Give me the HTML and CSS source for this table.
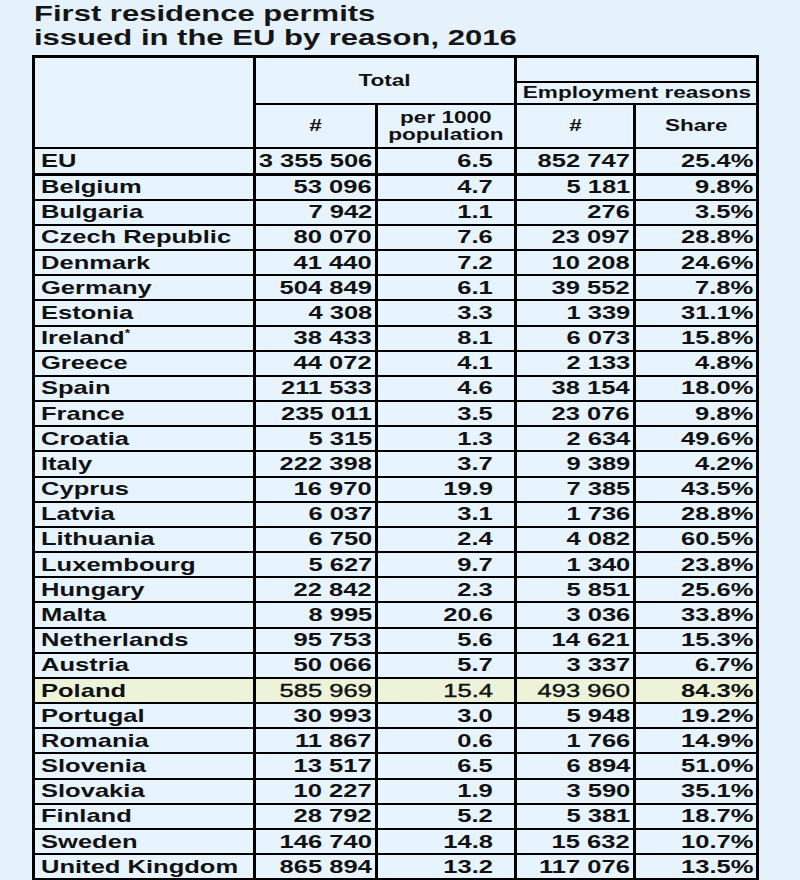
FILE: index.html
```html
<!DOCTYPE html>
<html lang="en">
<head>
<meta charset="utf-8">
<title>First residence permits issued in the EU by reason, 2016</title>
<link rel="stylesheet" href="styles.css">
</head>
<body>
<div class="page">
  <h1 class="title">
    <span class="line">First residence permits</span>
    <span class="line">issued in the EU by reason, 2016</span>
  </h1>
  <table class="permits">
    <colgroup>
      <col class="c-country">
      <col class="c-num">
      <col class="c-rate">
      <col class="c-emp">
      <col class="c-share">
    </colgroup>
    <thead>
      <tr class="h1">
        <th rowspan="3" class="corner"></th>
        <th colspan="2" rowspan="2" class="hd"><span class="sx">Total</span></th>
        <th colspan="2" class="blank"></th>
      </tr>
      <tr class="h2">
        <th colspan="2" class="hd"><span class="sx">Employment reasons</span></th>
      </tr>
      <tr class="h3">
        <th class="hd"><span class="sx">#</span></th>
        <th class="hd"><span class="sx">per 1000<br>population</span></th>
        <th class="hd"><span class="sx">#</span></th>
        <th class="hd"><span class="sx">Share</span></th>
      </tr>
    </thead>
    <tbody>
      <tr class="eu"><td class="name"><span class="sx">EU</span></td><td class="num tight"><span class="sx">3 355 506</span></td><td class="num rate"><span class="sx">6.5</span></td><td class="num tight"><span class="sx">852 747</span></td><td class="num tight"><span class="sx">25.4%</span></td></tr>
      <tr><td class="name"><span class="sx">Belgium</span></td><td class="num"><span class="sx">53 096</span></td><td class="num rate"><span class="sx">4.7</span></td><td class="num"><span class="sx">5 181</span></td><td class="num"><span class="sx">9.8%</span></td></tr>
      <tr><td class="name"><span class="sx">Bulgaria</span></td><td class="num"><span class="sx">7 942</span></td><td class="num rate"><span class="sx">1.1</span></td><td class="num"><span class="sx">276</span></td><td class="num"><span class="sx">3.5%</span></td></tr>
      <tr><td class="name"><span class="sx">Czech Republic</span></td><td class="num"><span class="sx">80 070</span></td><td class="num rate"><span class="sx">7.6</span></td><td class="num"><span class="sx">23 097</span></td><td class="num"><span class="sx">28.8%</span></td></tr>
      <tr><td class="name"><span class="sx">Denmark</span></td><td class="num"><span class="sx">41 440</span></td><td class="num rate"><span class="sx">7.2</span></td><td class="num"><span class="sx">10 208</span></td><td class="num"><span class="sx">24.6%</span></td></tr>
      <tr><td class="name"><span class="sx">Germany</span></td><td class="num"><span class="sx">504 849</span></td><td class="num rate"><span class="sx">6.1</span></td><td class="num"><span class="sx">39 552</span></td><td class="num"><span class="sx">7.8%</span></td></tr>
      <tr><td class="name"><span class="sx">Estonia</span></td><td class="num"><span class="sx">4 308</span></td><td class="num rate"><span class="sx">3.3</span></td><td class="num"><span class="sx">1 339</span></td><td class="num"><span class="sx">31.1%</span></td></tr>
      <tr><td class="name"><span class="sx">Ireland<sup>*</sup></span></td><td class="num"><span class="sx">38 433</span></td><td class="num rate"><span class="sx">8.1</span></td><td class="num"><span class="sx">6 073</span></td><td class="num"><span class="sx">15.8%</span></td></tr>
      <tr><td class="name"><span class="sx">Greece</span></td><td class="num"><span class="sx">44 072</span></td><td class="num rate"><span class="sx">4.1</span></td><td class="num"><span class="sx">2 133</span></td><td class="num"><span class="sx">4.8%</span></td></tr>
      <tr><td class="name"><span class="sx">Spain</span></td><td class="num"><span class="sx">211 533</span></td><td class="num rate"><span class="sx">4.6</span></td><td class="num"><span class="sx">38 154</span></td><td class="num"><span class="sx">18.0%</span></td></tr>
      <tr><td class="name"><span class="sx">France</span></td><td class="num"><span class="sx">235 011</span></td><td class="num rate"><span class="sx">3.5</span></td><td class="num"><span class="sx">23 076</span></td><td class="num"><span class="sx">9.8%</span></td></tr>
      <tr><td class="name"><span class="sx">Croatia</span></td><td class="num"><span class="sx">5 315</span></td><td class="num rate"><span class="sx">1.3</span></td><td class="num"><span class="sx">2 634</span></td><td class="num"><span class="sx">49.6%</span></td></tr>
      <tr><td class="name"><span class="sx">Italy</span></td><td class="num"><span class="sx">222 398</span></td><td class="num rate"><span class="sx">3.7</span></td><td class="num"><span class="sx">9 389</span></td><td class="num"><span class="sx">4.2%</span></td></tr>
      <tr><td class="name"><span class="sx">Cyprus</span></td><td class="num"><span class="sx">16 970</span></td><td class="num rate"><span class="sx">19.9</span></td><td class="num"><span class="sx">7 385</span></td><td class="num"><span class="sx">43.5%</span></td></tr>
      <tr><td class="name"><span class="sx">Latvia</span></td><td class="num"><span class="sx">6 037</span></td><td class="num rate"><span class="sx">3.1</span></td><td class="num"><span class="sx">1 736</span></td><td class="num"><span class="sx">28.8%</span></td></tr>
      <tr><td class="name"><span class="sx">Lithuania</span></td><td class="num"><span class="sx">6 750</span></td><td class="num rate"><span class="sx">2.4</span></td><td class="num"><span class="sx">4 082</span></td><td class="num"><span class="sx">60.5%</span></td></tr>
      <tr><td class="name"><span class="sx">Luxembourg</span></td><td class="num"><span class="sx">5 627</span></td><td class="num rate"><span class="sx">9.7</span></td><td class="num"><span class="sx">1 340</span></td><td class="num"><span class="sx">23.8%</span></td></tr>
      <tr><td class="name"><span class="sx">Hungary</span></td><td class="num"><span class="sx">22 842</span></td><td class="num rate"><span class="sx">2.3</span></td><td class="num"><span class="sx">5 851</span></td><td class="num"><span class="sx">25.6%</span></td></tr>
      <tr><td class="name"><span class="sx">Malta</span></td><td class="num"><span class="sx">8 995</span></td><td class="num rate"><span class="sx">20.6</span></td><td class="num"><span class="sx">3 036</span></td><td class="num"><span class="sx">33.8%</span></td></tr>
      <tr><td class="name"><span class="sx">Netherlands</span></td><td class="num"><span class="sx">95 753</span></td><td class="num rate"><span class="sx">5.6</span></td><td class="num"><span class="sx">14 621</span></td><td class="num"><span class="sx">15.3%</span></td></tr>
      <tr><td class="name"><span class="sx">Austria</span></td><td class="num"><span class="sx">50 066</span></td><td class="num rate"><span class="sx">5.7</span></td><td class="num"><span class="sx">3 337</span></td><td class="num"><span class="sx">6.7%</span></td></tr>
      <tr class="hl"><td class="name"><span class="sx">Poland</span></td><td class="num light"><span class="sx">585 969</span></td><td class="num rate light"><span class="sx">15.4</span></td><td class="num light"><span class="sx">493 960</span></td><td class="num"><span class="sx">84.3%</span></td></tr>
      <tr><td class="name"><span class="sx">Portugal</span></td><td class="num"><span class="sx">30 993</span></td><td class="num rate"><span class="sx">3.0</span></td><td class="num"><span class="sx">5 948</span></td><td class="num"><span class="sx">19.2%</span></td></tr>
      <tr><td class="name"><span class="sx">Romania</span></td><td class="num"><span class="sx">11 867</span></td><td class="num rate"><span class="sx">0.6</span></td><td class="num"><span class="sx">1 766</span></td><td class="num"><span class="sx">14.9%</span></td></tr>
      <tr><td class="name"><span class="sx">Slovenia</span></td><td class="num"><span class="sx">13 517</span></td><td class="num rate"><span class="sx">6.5</span></td><td class="num"><span class="sx">6 894</span></td><td class="num"><span class="sx">51.0%</span></td></tr>
      <tr><td class="name"><span class="sx">Slovakia</span></td><td class="num"><span class="sx">10 227</span></td><td class="num rate"><span class="sx">1.9</span></td><td class="num"><span class="sx">3 590</span></td><td class="num"><span class="sx">35.1%</span></td></tr>
      <tr><td class="name"><span class="sx">Finland</span></td><td class="num"><span class="sx">28 792</span></td><td class="num rate"><span class="sx">5.2</span></td><td class="num"><span class="sx">5 381</span></td><td class="num"><span class="sx">18.7%</span></td></tr>
      <tr><td class="name"><span class="sx">Sweden</span></td><td class="num"><span class="sx">146 740</span></td><td class="num rate"><span class="sx">14.8</span></td><td class="num"><span class="sx">15 632</span></td><td class="num"><span class="sx">10.7%</span></td></tr>
      <tr><td class="name"><span class="sx">United Kingdom</span></td><td class="num"><span class="sx">865 894</span></td><td class="num rate"><span class="sx">13.2</span></td><td class="num"><span class="sx">117 076</span></td><td class="num"><span class="sx">13.5%</span></td></tr>
    </tbody>
  </table>
</div>
</body>
</html>
```
FILE: styles.css
```css
html, body {
  margin: 0;
  padding: 0;
  background: #e5f2fc;
}

.page {
  width: 800px;
  height: 880px;
  overflow: hidden;
  font-family: "Liberation Sans", Arial, sans-serif;
  color: #111;
}

.title {
  margin: 0;
  padding: 2px 0 0 34px;
  font-size: 22px;
  line-height: 24px;
  font-weight: bold;
  color: #151515;
  height: 55px;
  box-sizing: border-box;
}

.title .line {
  display: block;
  transform: scaleX(1.41);
  transform-origin: left center;
  white-space: nowrap;
}

.permits {
  margin-left: 32px;
  border-collapse: collapse;
  table-layout: fixed;
  width: 724px;
  border: 3px solid #000;
  background: #e8f4fd;
}

.c-country { width: 221px; }
.c-num { width: 122px; }
.c-rate { width: 139px; }
.c-emp { width: 119px; }
.c-share { width: 123px; }

.permits th,
.permits td {
  border: 2px solid #000;
  border-left-width: 3px;
  border-right-width: 3px;
  padding: 0;
  white-space: nowrap;
  vertical-align: middle;
}

.sx {
  display: inline-block;
  transform: scaleX(1.38);
}

.hd {
  font-size: 16px;
  font-weight: bold;
  line-height: 17px;
  text-align: center;
}

.hd .sx {
  transform: scaleX(1.41);
  transform-origin: center center;
}

.h1 { height: 25px; }
.h2 { height: 22px; }
.h3 { height: 44px; }

.permits td {
  font-size: 18.5px;
  font-weight: bold;
  line-height: 20px;
  height: 23.18px;
}

.eu td {
  height: 24px;
  border-bottom-width: 3px;
}

.name {
  text-align: left;
  padding-left: 6px !important;
}

.name .sx {
  transform-origin: left center;
}

.name sup {
  font-size: 10px;
  line-height: 0;
  vertical-align: 7px;
}

.num {
  text-align: right;
  padding-right: 3px !important;
}

.num .sx {
  transform-origin: right center;
}

.num.rate {
  padding-right: 21px !important;
}

.hl td {
  background: #edf3d9;
}

.hl .light {
  font-weight: normal;
  -webkit-text-stroke: 0.4px #111;
}
```
